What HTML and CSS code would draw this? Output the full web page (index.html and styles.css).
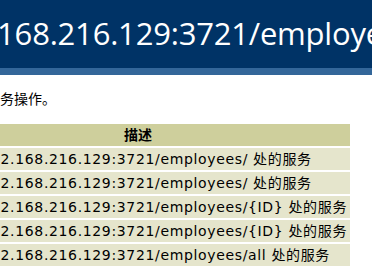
FILE: index.html
```html
<!DOCTYPE html>
<html lang="zh-CN">
<head>
<meta charset="utf-8">
<title>服务</title>
<link rel="stylesheet" href="styles.css">
</head>
<body>
<div class="content">
  <p class="heading1">http://192.168.216.129:3721/employees/</p>
  <p class="intro">此页描述了此终结点上的服务操作。</p>
  <table class="ops">
    <tr><th>描述</th></tr>
    <tr><td>http://192.168.216.129:3721/employees/ 处的服务</td></tr>
    <tr><td>http://192.168.216.129:3721/employees/ 处的服务</td></tr>
    <tr><td>http://192.168.216.129:3721/employees/{ID} 处的服务</td></tr>
    <tr><td>http://192.168.216.129:3721/employees/{ID} 处的服务</td></tr>
    <tr><td>http://192.168.216.129:3721/employees/all 处的服务</td></tr>
  </table>
</div>
</body>
</html>
```
FILE: styles.css
```css
html, body {
  margin: 0;
  padding: 0;
  background: #ffffff;
  color: #000000;
  overflow: hidden;
}

.content {
  font-family: "DejaVu Sans", Verdana, "Noto Sans CJK SC", sans-serif;
  font-size: 14px;
}

.heading1 {
  margin: 0;
  background-color: #003366;
  border-bottom: 7px solid #336699;
  color: #ffffff;
  font-family: "Open Sans", "Noto Sans CJK SC", sans-serif;
  font-size: 31px;
  font-weight: normal;
  line-height: 42px;
  padding: 12px 0 14px 0;
  white-space: nowrap;
  overflow: hidden;
  text-indent: -153px;
  letter-spacing: -0.2px;
}

.intro {
  margin: 16px 0 16px 0;
  line-height: 17px;
  white-space: nowrap;
  text-indent: -168px;
  font-family: "DejaVu Sans", "Noto Sans CJK SC", sans-serif;
}

.ops {
  border-collapse: collapse;
  border-spacing: 0;
  margin-left: -74px;
  width: 426px;
  table-layout: fixed;
  font-family: "DejaVu Sans", "Noto Sans CJK SC", sans-serif;
}

.ops th,
.ops td {
  border-right: 2px solid #ffffff;
  border-bottom: 2px solid #ffffff;
  line-height: 22px;
  height: 22px;
  white-space: nowrap;
  overflow: hidden;
}

.ops th {
  background-color: #cecf9c;
  font-weight: bold;
  text-align: center;
  padding: 0;
}

.ops td {
  background-color: #e5e5cc;
  padding: 0 0 0 8px;
  letter-spacing: 0.65px;
}
```
